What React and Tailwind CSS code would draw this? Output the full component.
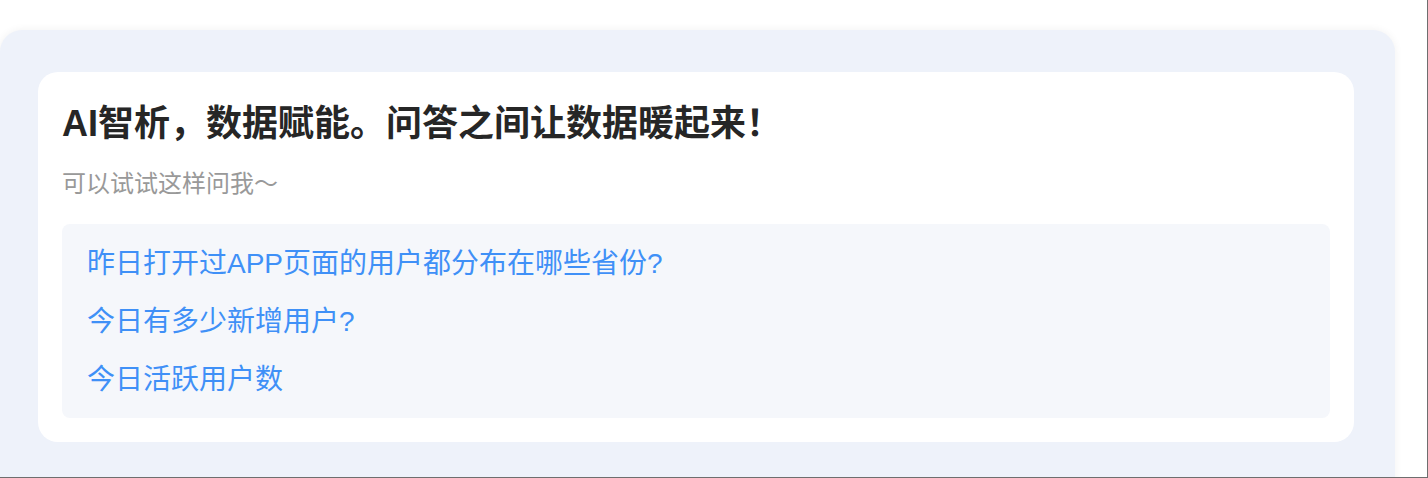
export default function App() {
  const items = [
    "昨日打开过APP页面的用户都分布在哪些省份?",
    "今日有多少新增用户?",
    "今日活跃用户数",
  ];
  return (
    <div
      className="w-[1428px] h-[478px] bg-white overflow-hidden border-r border-b border-[#6e6e6e] pt-[30px]"
      style={{ fontFamily: '"Liberation Sans", "Noto Sans CJK SC", sans-serif' }}
    >
      <div className="w-[1395px] h-[460px] bg-[#eef2fa] rounded-tl-[22px] rounded-tr-[22px] shadow-[0_0_8px_rgba(0,0,0,0.06)] pl-[38px] pr-[41px] pt-[42px]">
        <div className="bg-white rounded-[20px] px-[24px] pt-[28px] pb-[24px]">
          <h1 className="text-[36px] leading-[48px] font-bold text-[#262626]">
            AI智析，数据赋能。问答之间让数据暖起来！
          </h1>
          <p className="mt-[18px] text-[24px] leading-[36px] text-[#999999]">
            可以试试这样问我～
          </p>
          <div className="mt-[22px] bg-[#f5f7fb] rounded-[8px] px-[25px] pt-[19px] pb-[17px] flex flex-col gap-[16px]">
            {items.map((t) => (
              <div key={t} className="text-[28px] leading-[42px] text-[#3f90f7] cursor-pointer">
                {t}
              </div>
            ))}
          </div>
        </div>
      </div>
    </div>
  );
}
